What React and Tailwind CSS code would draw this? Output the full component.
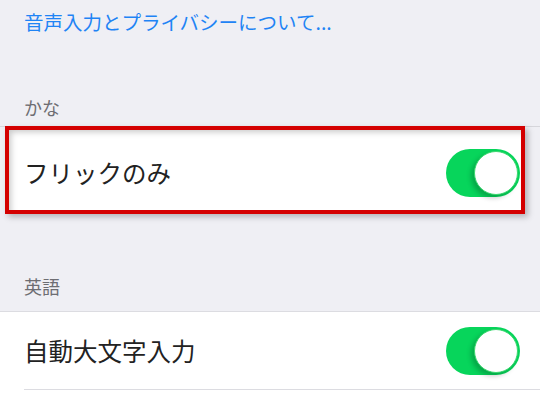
import React from "react";

const font = { fontFamily: '"Noto Sans CJK JP", "Noto Sans", sans-serif' };

const Toggle = () => (
  <div className="w-[74px] h-[48px] rounded-full bg-[#07d55b] p-[2px] flex justify-end">
    <div className="w-[44px] h-[44px] rounded-full bg-white border border-[#3bd86f] shadow-[-3px_3px_5px_rgba(0,0,0,0.22)]" />
  </div>
);

const App = () => {
  return (
    <div className="w-[540px] h-[400px] bg-[#efeff4] overflow-hidden" style={font}>
      <div className="pl-6 pt-[8px] text-[19.5px] leading-[28px] text-[#1f84f5]">
        音声入力とプライバシーについて...
      </div>

      <div className="h-[90px] flex items-end pl-6 pb-[7px] text-[18px] leading-[24px] text-[#6d6d72]">
        かな
      </div>

      <div className="border-t border-[#d6d6db]">
        <div className="ml-[5px] w-[520px] h-[88px] -mt-px border-4 border-[#d40000] bg-white shadow-[inset_7px_7px_6px_-5px_rgba(0,0,0,0.22),3px_3px_6px_rgba(0,0,0,0.25)] flex items-center justify-between pl-[15px] pr-[1px] pt-[6px]">
          <span className="text-[24.5px] leading-[30px] text-[#222]">フリックのみ</span>
          <Toggle />
        </div>
      </div>

      <div className="h-[97px] flex items-end pl-6 pb-[13px] text-[18px] leading-[24px] text-[#6d6d72]">
        英語
      </div>

      <div className="border-t border-[#dcdce1] bg-white">
        <div className="h-[77px] flex items-center justify-between pl-6 pr-[20px]">
          <span className="text-[24.5px] leading-[30px] text-[#222]">自動大文字入力</span>
          <Toggle />
        </div>
        <div className="ml-6 border-t border-[#dcdce1] h-[20px]" />
      </div>
    </div>
  );
};

export default App;
